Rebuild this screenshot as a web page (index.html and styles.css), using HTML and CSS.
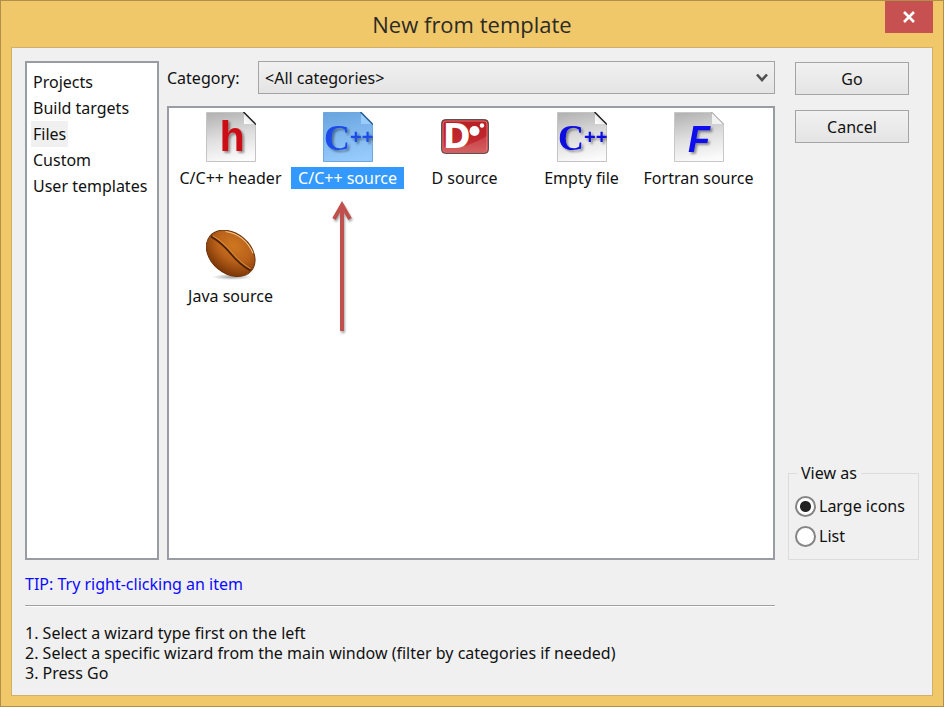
FILE: index.html
```html
<!DOCTYPE html>
<html lang="en">
<head>
<meta charset="utf-8">
<title>New from template</title>
<link rel="stylesheet" href="styles.css">
</head>
<body>
<svg class="defs" width="0" height="0" aria-hidden="true">
  <defs>
    <linearGradient id="paper" x1="0.3" y1="0" x2="0.5" y2="1">
      <stop offset="0" stop-color="#b4b4b4"/>
      <stop offset="0.5" stop-color="#dedede"/>
      <stop offset="1" stop-color="#fbfbfb"/>
    </linearGradient>
    <linearGradient id="paper-selected" x1="0.3" y1="0" x2="0.5" y2="1">
      <stop offset="0" stop-color="#6ba6e0"/>
      <stop offset="0.5" stop-color="#82b9ef"/>
      <stop offset="1" stop-color="#97cbfd"/>
    </linearGradient>
    <linearGradient id="fold" x1="0" y1="1" x2="1" y2="0">
      <stop offset="0" stop-color="#ffffff"/>
      <stop offset="1" stop-color="#d8d8d8"/>
    </linearGradient>
    <linearGradient id="dred" x1="0" y1="0" x2="0" y2="1">
      <stop offset="0" stop-color="#b51f24"/>
      <stop offset="0.6" stop-color="#c2282d"/>
      <stop offset="1" stop-color="#cf4a4c"/>
    </linearGradient>
    <radialGradient id="bean" cx="0.45" cy="0.3" r="0.7">
      <stop offset="0" stop-color="#cf7820"/>
      <stop offset="0.5" stop-color="#b9611a"/>
      <stop offset="1" stop-color="#7b3607"/>
    </radialGradient>
    <radialGradient id="ground">
      <stop offset="0" stop-color="#777" stop-opacity="0.7"/>
      <stop offset="1" stop-color="#777" stop-opacity="0"/>
    </radialGradient>
    <filter id="drop" x="-30%" y="-30%" width="170%" height="170%">
      <feDropShadow dx="2" dy="2" stdDeviation="1" flood-color="#000" flood-opacity="0.4"/>
    </filter>
  </defs>
</svg>
<div class="window">
  <header class="titlebar">
    <h1>New from template</h1>
    <button class="close" type="button" aria-label="Close">
      <svg width="14" height="12" viewBox="0 0 14 12"><path d="M2 1l10 10M12 1L2 11" stroke="#fff" stroke-width="2.6"/></svg>
    </button>
  </header>
  <main class="client">
    <nav class="kinds">
      <ul>
        <li><button type="button">Projects</button></li>
        <li><button type="button">Build targets</button></li>
        <li><button type="button" class="current">Files</button></li>
        <li><button type="button">Custom</button></li>
        <li><button type="button">User templates</button></li>
      </ul>
    </nav>
    <section class="browser">
      <div class="filter">
        <label for="category">Category:</label>
        <div class="combo">
          <select id="category"><option>&lt;All categories&gt;</option></select>
          <svg class="chevron" width="12" height="10" viewBox="0 0 12 10"><path d="M1 1.5l5 5.500 5-5.500" fill="none" stroke="#505050" stroke-width="2.6"/></svg>
        </div>
      </div>
      <div class="templates">
        <button class="template" type="button">
          <svg width="50" height="50" viewBox="0 0 50 50">
            <path d="M.5.5H38L49.500 12V49.500H.5z" fill="url(#paper)" stroke="#c4c4c4"/>
            <path d="M38 .5V12H49.500z" fill="url(#fold)"/><path d="M37.500 0L50 12.500" stroke="#222" stroke-width="1.500"/>
            <text class="glyph-h" x="26" y="39" text-anchor="middle" filter="url(#drop)">h</text>
          </svg>
          <span>C/C++ header</span>
        </button>
        <button class="template selected" type="button">
          <svg width="50" height="50" viewBox="0 0 50 50">
            <path d="M.5.5H38L49.500 12V49.500H.5z" fill="url(#paper-selected)" stroke="#6fa8df"/>
            <path d="M38 .5V12H49.500z" fill="#9bcbfa"/><path d="M37.500 0L50 12.500" stroke="#245d96" stroke-width="1.500"/>
            <g fill="#1a4be8" filter="url(#drop)">
              <text class="glyph-c" x="1" y="38">C</text>
              <text class="glyph-plus" x="27" y="32">++</text>
            </g>
          </svg>
          <span>C/C++ source</span>
        </button>
        <button class="template" type="button">
          <svg width="50" height="50" viewBox="0 0 50 50">
            <rect x="1.500" y="7.500" width="47" height="34" rx="4" fill="url(#dred)" stroke="#555"/>
            <rect x="3" y="9" width="44" height="31" rx="3" fill="none" stroke="#dc7476"/>
            <path d="M4 35Q22 39 47 24V37Q47 39 44 39H4z" fill="#fff" opacity=".14"/>
            <text class="glyph-d" x="3" y="36">D</text>
            <circle cx="34.500" cy="19" r="5" fill="#fff"/>
            <circle cx="42" cy="13.500" r="2.200" fill="#fff"/>
          </svg>
          <span>D source</span>
        </button>
        <button class="template" type="button">
          <svg width="50" height="50" viewBox="0 0 50 50">
            <path d="M.5.5H38L49.500 12V49.500H.5z" fill="url(#paper)" stroke="#c4c4c4"/>
            <path d="M38 .5V12H49.500z" fill="url(#fold)"/><path d="M37.500 0L50 12.500" stroke="#222" stroke-width="1.500"/>
            <g fill="#0808e0" filter="url(#drop)">
              <text class="glyph-c" x="1" y="38">C</text>
              <text class="glyph-plus" x="27" y="32">++</text>
            </g>
          </svg>
          <span>Empty file</span>
        </button>
        <button class="template" type="button">
          <svg width="50" height="50" viewBox="0 0 50 50">
            <path d="M.5.5H38L49.500 12V49.500H.5z" fill="url(#paper)" stroke="#c8c8c8"/>
            <path d="M38 .5V12H49.500z" fill="#f2f2f2"/><path d="M37.500 0L50 12.500" stroke="#999"/>
            <text class="glyph-f" x="25" y="40" text-anchor="middle" filter="url(#drop)">F</text>
          </svg>
          <span>Fortran source</span>
        </button>
        <button class="template" type="button">
          <svg width="50" height="50" viewBox="0 0 50 50">
            <ellipse cx="26" cy="47" rx="20" ry="3" fill="url(#ground)"/>
            <g transform="rotate(40 25 23)">
              <ellipse cx="25" cy="23.500" rx="27" ry="20" fill="url(#bean)" stroke="#6a3209"/>
              <path d="M-1 23Q12 21 25 23.500T51 24" fill="none" stroke="#4f2302" stroke-width="2"/>
              <path d="M0 21.500Q12 19.500 25 22T50 22.500" fill="none" stroke="#d68a3a" stroke-width="1"/>
              <path d="M7 10Q24 0 42 9" fill="none" stroke="#f3c68d" stroke-width="1"/>
            </g>
          </svg>
          <span>Java source</span>
        </button>
        <svg class="pointer" width="28" height="138" viewBox="0 0 28 138" aria-hidden="true">
          <path d="M14 7V132M6 20L14 6 22 20" fill="none" stroke="#c0504d" stroke-width="4"/>
        </svg>
      </div>
    </section>
    <aside class="side">
      <div class="actions">
        <button type="button">Go</button>
        <button type="button">Cancel</button>
      </div>
      <fieldset class="view">
        <legend>View as</legend>
        <label><input type="radio" name="view" checked>Large icons</label>
        <label><input type="radio" name="view">List</label>
      </fieldset>
    </aside>
    <footer class="help">
      <p class="tip">TIP: Try right-clicking an item</p>
      <hr>
      <p>1. Select a wizard type first on the left</p>
      <p>2. Select a specific wizard from the main window (filter by categories if needed)</p>
      <p>3. Press Go</p>
    </footer>
  </main>
</div>
</body>
</html>
```
FILE: styles.css
```css
* { box-sizing: border-box; }
body {
  margin: 0;
  color: #111;
  font: 16px/20px "Noto Sans", sans-serif;
}
button, select { font: inherit; color: inherit; }
ul { list-style: none; margin: 0; padding: 0; }
p { margin: 0; }
.defs { position: absolute; }

.window {
  display: flex;
  flex-direction: column;
  min-height: 100vh;
  padding: 0 10px 10px;
  border: 1px solid #b08f48;
  background: #f0c869;
}
.titlebar {
  position: relative;
  display: flex;
  justify-content: center;
  align-items: center;
  height: 46px;
}
.titlebar h1 { margin: 0; font: 22px/32px "Open Sans", sans-serif; color: #2c2a26; }
.close {
  position: absolute;
  top: 0;
  right: 0;
  display: grid;
  place-items: center;
  width: 48px;
  height: 32px;
  padding: 0;
  border: 0;
  background: #c75050;
}
.client {
  flex: 1;
  display: grid;
  grid-template-columns: 134px 1fr 131px;
  grid-template-rows: 1fr auto;
  padding: 13px 13px 12px 13px;
  border: 1px solid #d2b067;
  background: #f0f0f0;
}
.kinds { padding: 6px 4px; border: 2px solid #9a9ca4; background: #fff; }
.kinds li { display: flex; }
.kinds button {
  height: 26px;
  padding: 0 2px;
  border: 0;
  background: none;
  white-space: nowrap;
}
.kinds .current { background: #f0f0f0; }

.browser { display: flex; flex-direction: column; gap: 12px; margin: 0 13px 0 8px; }
.filter { display: grid; grid-template-columns: 91px 1fr; align-items: center; }
.combo { position: relative; display: flex; }
.combo select {
  flex: 1;
  height: 33px;
  padding: 0 6px;
  border: 1px solid #a4a4a4;
  border-radius: 0;
  background: linear-gradient(#f1f1f1, #e4e4e4);
  appearance: none;
}
.chevron { position: absolute; right: 7px; top: 12px; pointer-events: none; }
.templates {
  position: relative;
  flex: 1;
  display: grid;
  grid-template-columns: repeat(auto-fill, 117px);
  grid-auto-rows: 78px;
  gap: 40px 0;
  padding: 4px 3px;
  border: 2px solid #9a9ca4;
  background: #fff;
}
.template {
  display: flex;
  flex-direction: column;
  align-items: center;
  gap: 5px;
  padding: 0;
  border: 0;
  background: none;
  white-space: nowrap;
}
.template svg { flex: none; }
.template span { padding: 0 7px; line-height: 22px; }
.selected span { background: #3399ff; color: #fff; }
.glyph-h { font: bold 42px "Liberation Mono", monospace; fill: #cc0f16; }
.glyph-c { font: bold 36px "Liberation Serif", serif; }
.glyph-plus { font: bold 20px "Liberation Sans", sans-serif; }
.glyph-d { font: bold 33px "DejaVu Sans", sans-serif; fill: #fff; }
.glyph-f { font: italic bold 36px "Liberation Sans", sans-serif; fill: #0808ee; }
.pointer { position: absolute; left: 159px; top: 91px; filter: drop-shadow(1px 2px 1px rgb(0 0 0 / 35%)); }

.side { display: flex; flex-direction: column; justify-content: space-between; }
.actions { display: grid; gap: 15px; padding: 1px 10px 0 7px; }
.actions button {
  height: 33px;
  padding: 0;
  border: 1px solid #a4a4a4;
  background: linear-gradient(#f1f1f1, #e4e4e4);
}
.view { margin: 0; min-width: 0; padding: 8px 6px; border: 1px solid #dcdcdc; }
.view legend { padding: 0 4px; margin-left: 2px; }
.view label { display: flex; align-items: center; gap: 3px; height: 30px; white-space: nowrap; }
.view input {
  appearance: none;
  flex: none;
  width: 21px;
  height: 21px;
  margin: 0;
  border: 2px solid #858585;
  border-radius: 50%;
  background: #fff;
}
.view input:checked { background: radial-gradient(circle, #222 0 5px, #fff 6px); }

.help { grid-column: 1 / 3; padding-top: 14px; margin-right: 13px; }
.tip { color: #0b0bff; }
.help hr { height: 2px; margin: 11px 0 16px; border: 0; border-top: 1px solid #a0a0a0; border-bottom: 1px solid #fff; }
```
